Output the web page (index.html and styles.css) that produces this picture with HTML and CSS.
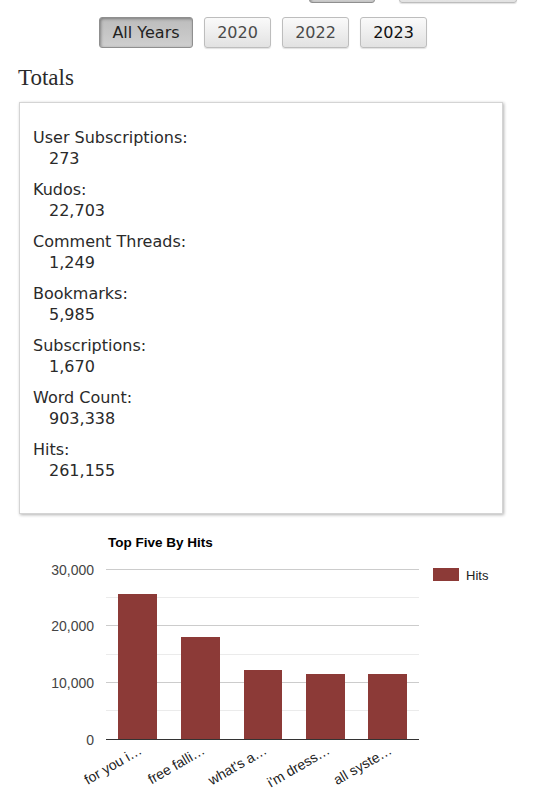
FILE: index.html
```html
<!DOCTYPE html>
<html lang="en">
<head>
    <meta charset="UTF-8">
    <meta name="viewport" content="width=device-width, initial-scale=1.0">
    <title>Stats</title>

    <link rel="stylesheet" href="styles.css">
</head>
<body>
    <div class="sort-row">
        <span class="btn btn-current btn-sort"></span>
        <span class="btn btn-sort-wide"></span>
    </div>

    <div class="year-row">
        <span class="btn btn-current">All Years</span>
        <span class="btn">2020</span>
        <span class="btn">2022</span>
        <span class="btn btn-dark">2023</span>
    </div>

    <h3 class="heading">Totals</h3>

    <div class="totals">
        <dl>
            <dt>User Subscriptions:</dt>
            <dd>273</dd>
            <dt>Kudos:</dt>
            <dd>22,703</dd>
            <dt>Comment Threads:</dt>
            <dd>1,249</dd>
            <dt>Bookmarks:</dt>
            <dd>5,985</dd>
            <dt>Subscriptions:</dt>
            <dd>1,670</dd>
            <dt>Word Count:</dt>
            <dd>903,338</dd>
            <dt>Hits:</dt>
            <dd>261,155</dd>
        </dl>
    </div>

    <!-- chart: 0 at y=219, 30,000 at y=49 -->
    <svg class="chart" width="540" height="278" viewBox="0 0 540 278">
        <text class="chart-title" x="108" y="27">Top Five By Hits</text>

        <g class="grid-minor">
            <line x1="106" x2="419" y1="77.5" y2="77.5"/>
            <line x1="106" x2="419" y1="134.5" y2="134.5"/>
            <line x1="106" x2="419" y1="190.5" y2="190.5"/>
        </g>
        <g class="grid-major">
            <line x1="106" x2="419" y1="49.5" y2="49.5"/>
            <line x1="106" x2="419" y1="105.5" y2="105.5"/>
            <line x1="106" x2="419" y1="162.5" y2="162.5"/>
        </g>

        <g class="axis-label">
            <text x="94" y="55">30,000</text>
            <text x="94" y="111">20,000</text>
            <text x="94" y="168">10,000</text>
            <text x="94" y="225">0</text>
        </g>

        <g class="bars">
            <rect x="118" y="74" width="39" height="145"/>
            <rect x="181" y="117" width="39" height="102"/>
            <rect x="244" y="150" width="38" height="69"/>
            <rect x="306" y="154" width="39" height="65"/>
            <rect x="368" y="154" width="39" height="65"/>
        </g>

        <line class="baseline" x1="106" x2="419" y1="219.5" y2="219.5"/>

        <g class="tick-label">
            <text transform="translate(143 233) rotate(-30)">for you i…</text>
            <text transform="translate(206 233) rotate(-30)">free falli…</text>
            <text transform="translate(268 233) rotate(-30)">what's a…</text>
            <text transform="translate(331 233) rotate(-30)">i'm dress…</text>
            <text transform="translate(393 233) rotate(-30)">all syste…</text>
        </g>

        <rect class="legend-key" x="433" y="48" width="26" height="13"/>
        <text class="legend-label" x="466" y="60">Hits</text>
    </svg>
</body>
</html>
```

FILE: styles.css
```css
body {
    font-family: 'DejaVu Sans', Verdana, sans-serif;
    margin: 0;
    padding: 0;
    background-color: #fff;
    color: #2a2a2a;
    overflow: hidden;
}

.btn {
    display: flex;
    align-items: center;
    justify-content: center;
    box-sizing: border-box;
    height: 31px;
    padding: 0 6px;
    font-size: 16px;
    white-space: nowrap;
    color: #4a4a4a;
    background: linear-gradient(#fafafa, #e2e2e2);
    border: 1px solid #bdbdbd;
    border-radius: 3px;
    box-shadow: 0 1px 1px rgba(0, 0, 0, 0.12);
}

.btn-current {
    color: #222;
    background: linear-gradient(#bcbcbc, #cfcfcf);
    border-color: #8f8f8f;
    box-shadow: inset 1px 1px 3px rgba(0, 0, 0, 0.35);
}

.btn-dark {
    color: #111;
}

.sort-row {
    display: flex;
    gap: 24px;
    margin-top: -28px;
    padding-left: 309px;
}

.btn-sort {
    width: 66px;
}

.btn-sort-wide {
    width: 118px;
}

.year-row {
    display: flex;
    gap: 11px;
    margin-top: 14px;
    padding-left: 99px;
}

.year-row .btn {
    width: 67px;
}

.year-row .btn:first-child {
    width: 94px;
}

.heading {
    font-family: 'Liberation Serif', 'Times New Roman', serif;
    font-weight: normal;
    font-size: 23px;
    color: #2a2a2a;
    margin: 16px 0 0 18px;
    line-height: 28px;
}

.totals {
    margin: 10px 37px 0 19px;
    padding: 24px 13px 22px;
    border: 1px solid #d4d4d4;
    box-shadow: 1px 1px 3px rgba(0, 0, 0, 0.3);
}

.totals dl {
    margin: 0;
    font-size: 16px;
    line-height: 21px;
}

.totals dt {
    margin: 0;
}

.totals dd {
    margin: 0 0 10px 16px;
}

.chart {
    display: block;
    margin-top: 6px;
    font-family: 'Liberation Sans', Arial, sans-serif;
}

.chart-title {
    font-size: 13.5px;
    font-weight: bold;
    fill: #000;
}

.grid-major line {
    stroke: #cccccc;
    stroke-width: 1;
}

.grid-minor line {
    stroke: #ebebeb;
    stroke-width: 1;
}

.baseline {
    stroke: #333;
    stroke-width: 1;
}

.axis-label text {
    font-size: 14px;
    fill: #444;
    text-anchor: end;
}

.bars rect,
.legend-key {
    fill: #8c3a37;
}

.tick-label text {
    font-size: 14px;
    fill: #222;
    text-anchor: end;
}

.legend-label {
    font-size: 13px;
    fill: #222;
}
```
